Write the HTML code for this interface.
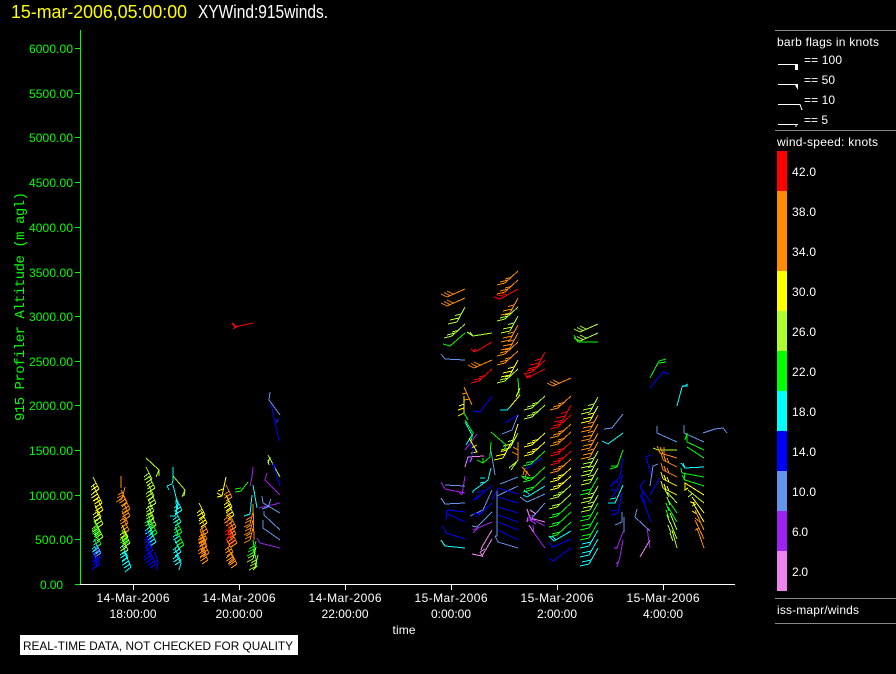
<!DOCTYPE html>
<html><head><meta charset="utf-8"><title>XYWind</title>
<style>
html,body{margin:0;padding:0;background:#000;width:896px;height:674px;overflow:hidden}
svg{display:block}
text{font-family:"Liberation Sans",sans-serif}
.l{fill:#fff;font-size:12px}
.gl{fill:#0f0;font-size:12px;text-anchor:end}
.x{fill:#fff;font-size:12px;text-anchor:middle}
.b{fill:none;shape-rendering:crispEdges;stroke-width:1}
.r{stroke:#f00}.o{stroke:#ff8c00}.y{stroke:#ff0}.v{stroke:#adff2f}.g{stroke:#0f0}.c{stroke:#0ff}.u{stroke:#00f}.w{stroke:#6495ed}.p{stroke:#a020f0}.k{stroke:#ee82ee}
</style></head><body>
<svg width="896" height="674" viewBox="0 0 896 674" xmlns="http://www.w3.org/2000/svg">
<defs>
<path id="f" d="M0 0L-8 15M-8 15l-9 2M-6 11l-9 2M-4 7l-6 1.500"/>
<path id="f2" d="M0 0L-9 16M-9 16l-9 2M-7 12l-9 2"/>
<path id="h" d="M0 0L-13 12M-13 12l-8 2M-10 9l-8 2M-7 6.500l-6 1.500"/>
<path id="h2" d="M0 0L-14 13M-14 13l-8 2M-11 10l-8 2"/>
<path id="h1" d="M0 0L-15 13M-15 13l-7 2"/>
<path id="e" d="M0 0L-18 8M-18 8l-6-3M-15 6.500l-6-3M-12 5l-6-3"/>
<path id="n" d="M0 0L6 12M6 12l-6 4M4.500 9l-6 4M3 6l-5 4"/>
<path id="m" d="M0 0L-3 12M-3 12l-6 3M-2 8l-6 3M-2 5l-5 3"/>
<path id="s" d="M0 0L-14-7M-14-7l-2-7M-11-5l-2-6M-8-4l-2-5"/>
</defs>
<rect width="896" height="674" fill="#000"/>

<text x="11" y="18" font-size="18" fill="#ff0" textLength="176" lengthAdjust="spacingAndGlyphs">15-mar-2006,05:00:00</text>
<text x="198" y="18" font-size="18" fill="#fff" textLength="130" lengthAdjust="spacingAndGlyphs">XYWind:915winds.</text>

<g shape-rendering="crispEdges" stroke="#0f0" fill="none">
<path d="M80.500 30V585M75 48.500h5M75 93.500h5M75 137.500h5M75 182.500h5M75 227.500h5M75 272.500h5M75 316.500h5M75 361.500h5M75 405.500h5M75 450.500h5M75 495.500h5M75 539.500h5M75 584.500h5"/>
</g>
<g class="gl">
<text x="73" y="53" textLength="44">6000.00</text>
<text x="73" y="98" textLength="44">5500.00</text>
<text x="73" y="142" textLength="44">5000.00</text>
<text x="73" y="187" textLength="44">4500.00</text>
<text x="73" y="232" textLength="44">4000.00</text>
<text x="73" y="277" textLength="44">3500.00</text>
<text x="73" y="321" textLength="44">3000.00</text>
<text x="73" y="366" textLength="44">2500.00</text>
<text x="73" y="410" textLength="44">2000.00</text>
<text x="73" y="455" textLength="44">1500.00</text>
<text x="73" y="500" textLength="44">1000.00</text>
<text x="73" y="544" textLength="38">500.00</text>
<text x="63" y="589" textLength="23">0.00</text>
</g>
<text transform="translate(24,421) rotate(-90)" font-size="14" fill="#0f0" style="font-family:'Liberation Mono',monospace" textLength="229">915 Profiler Altitude (m agl)</text>

<path shape-rendering="crispEdges" stroke="#fff" fill="none" d="M80 584.500H735M133.500 584V590M239.500 584V590M345.500 584V590M451.500 584V590M557.500 584V590M663.500 584V590"/>
<g class="x">
<text x="133" y="602" textLength="73">14-Mar-2006</text><text x="133" y="618" textLength="47">18:00:00</text>
<text x="239" y="602" textLength="73">14-Mar-2006</text><text x="239" y="618" textLength="47">20:00:00</text>
<text x="345" y="602" textLength="73">14-Mar-2006</text><text x="345" y="618" textLength="47">22:00:00</text>
<text x="451" y="602" textLength="73">15-Mar-2006</text><text x="451" y="618" textLength="40">0:00:00</text>
<text x="557" y="602" textLength="73">15-Mar-2006</text><text x="557" y="618" textLength="40">2:00:00</text>
<text x="663" y="602" textLength="73">15-Mar-2006</text><text x="663" y="618" textLength="40">4:00:00</text>
<text x="404" y="634" textLength="23">time</text>
</g>

<rect x="20" y="635" width="278" height="20" fill="#fff"/>
<text x="23" y="650" font-size="12" fill="#000" textLength="270" lengthAdjust="spacingAndGlyphs">REAL-TIME DATA, NOT CHECKED FOR QUALITY</text>

<path shape-rendering="crispEdges" stroke="#888" fill="none" d="M775 30.500H896M775 130.500H896M775 598.500H896M775 623.500H896"/>
<text class="l" x="777" y="46" textLength="102">barb flags in knots</text>
<g class="l">
<text x="804" y="64" textLength="38">== 100</text>
<text x="804" y="84" textLength="31">== 50</text>
<text x="804" y="104" textLength="31">== 10</text>
<text x="804" y="124" textLength="24">== 5</text>
</g>
<g shape-rendering="crispEdges" stroke="#fff" fill="none">
<path d="M778 64.500H798M778 84.500H798M778 104.500H800L802 110M778 124.500H798M796 124.500V127"/>
</g>
<rect x="795" y="64" width="3" height="6" fill="#fff"/>
<path d="M795 85H798V90Z" fill="#fff"/>
<text class="l" x="777" y="146" textLength="101">wind-speed: knots</text>
<g shape-rendering="crispEdges">
<rect x="777" y="151" width="10" height="40" fill="#f00"/>
<rect x="777" y="191" width="10" height="80" fill="#ff8c00"/>
<rect x="777" y="271" width="10" height="40" fill="#ff0"/>
<rect x="777" y="311" width="10" height="40" fill="#adff2f"/>
<rect x="777" y="351" width="10" height="40" fill="#0f0"/>
<rect x="777" y="391" width="10" height="40" fill="#0ff"/>
<rect x="777" y="431" width="10" height="40" fill="#00f"/>
<rect x="777" y="471" width="10" height="40" fill="#6495ed"/>
<rect x="777" y="511" width="10" height="40" fill="#a020f0"/>
<rect x="777" y="551" width="10" height="40" fill="#ee82ee"/>
</g>
<g class="l">
<text x="792" y="176" textLength="24">42.0</text>
<text x="792" y="216" textLength="24">38.0</text>
<text x="792" y="256" textLength="24">34.0</text>
<text x="792" y="296" textLength="24">30.0</text>
<text x="792" y="336" textLength="24">26.0</text>
<text x="792" y="376" textLength="24">22.0</text>
<text x="792" y="416" textLength="24">18.0</text>
<text x="792" y="456" textLength="24">14.0</text>
<text x="792" y="496" textLength="24">10.0</text>
<text x="792" y="536" textLength="16">6.0</text>
<text x="792" y="576" textLength="16">2.0</text>
<text x="777" y="614" textLength="82">iss-mapr/winds</text>
</g>

<g class="b">
<!-- isolated red at 2900 -->
<path class="r" d="M253 323L235 327L232 323M238 326L233 329M236 327l-3-4"/>

<!-- early columns -->
<use href="#n" class="y" x="93" y="477"/><use href="#n" class="y" x="93" y="485"/><use href="#n" class="y" x="96" y="491"/><use href="#n" class="y" x="97" y="498"/><use href="#n" class="y" x="95" y="505"/><use href="#n" class="v" x="97" y="512"/><use href="#n" class="v" x="94" y="519"/><use href="#n" class="v" x="97" y="525"/><use href="#n" class="g" x="94" y="521"/><use href="#n" class="g" x="95" y="532"/><use href="#n" class="c" x="94" y="539"/><use href="#n" class="u" x="95" y="545"/><use href="#n" class="w" x="95" y="541"/><use href="#n" class="u" x="94" y="552"/>
<path class="u" d="M92 570L97 565L94 556"/>

<path class="o" d="M121 476V488"/>
<use href="#m" class="o" x="125" y="487"/><use href="#n" class="o" x="121" y="490"/><use href="#n" class="o" x="124" y="497"/><use href="#n" class="o" x="124" y="504"/><use href="#n" class="o" x="122" y="511"/><use href="#n" class="o" x="123" y="518"/><use href="#n" class="y" x="122" y="525"/><use href="#n" class="v" x="124" y="531"/><use href="#n" class="g" x="122" y="530"/><use href="#n" class="v" x="122" y="538"/><use href="#n" class="c" x="122" y="545"/><use href="#n" class="c" x="124" y="552"/>
<path class="c" d="M125 572L131 567L125 553"/>

<path class="v" d="M146 458L159 470L156 477M159 470L159 476"/>
<use href="#n" class="v" x="146" y="467"/><use href="#n" class="v" x="149" y="476"/><use href="#n" class="v" x="148" y="484"/><use href="#n" class="v" x="150" y="491"/><use href="#n" class="v" x="148" y="499"/><use href="#n" class="v" x="148" y="506"/><use href="#n" class="g" x="147" y="513"/><use href="#n" class="v" x="150" y="513"/><use href="#n" class="c" x="147" y="521"/><use href="#n" class="g" x="151" y="521"/><use href="#n" class="u" x="146" y="530"/><use href="#n" class="c" x="150" y="530"/><use href="#n" class="u" x="147" y="538"/><use href="#n" class="u" x="146" y="547"/><use href="#n" class="u" x="150" y="552"/>
<path class="u" d="M156 570L158 563L155 552"/>

<path class="c" d="M173 467V480L172 484L167 486L169 490"/>
<path class="v" d="M173 476L185 490L182 497M185 490L184 496"/>
<path class="c" d="M173 485L178 505L175 516L170 516M176 500L177 515"/>
<use href="#n" class="c" x="176" y="498"/><use href="#n" class="c" x="175" y="510"/><use href="#n" class="g" x="176" y="520"/><use href="#n" class="c" x="175" y="527"/><use href="#n" class="g" x="178" y="533"/><use href="#n" class="c" x="175" y="540"/><use href="#n" class="c" x="175" y="549"/>
<path class="c" d="M179 570L181 563L176 555"/>

<use href="#n" class="y" x="199" y="503"/><use href="#n" class="y" x="201" y="511"/><use href="#n" class="o" x="202" y="520"/><use href="#n" class="o" x="201" y="527"/><use href="#n" class="o" x="201" y="534"/><use href="#n" class="o" x="203" y="541"/><use href="#n" class="o" x="202" y="548"/><use href="#n" class="o" x="200" y="541"/><use href="#n" class="o" x="200" y="530"/>

<path class="y" d="M226 477L222 496L217 497M222 496l-5-3M223 489l-5 2"/>
<use href="#n" class="o" x="226" y="485"/><use href="#n" class="y" x="226" y="495"/><use href="#n" class="y" x="228" y="503"/><use href="#n" class="o" x="226" y="510"/><use href="#n" class="o" x="230" y="515"/><use href="#n" class="r" x="227" y="522"/><use href="#n" class="o" x="230" y="522"/><use href="#n" class="r" x="228" y="530"/><use href="#n" class="o" x="231" y="531"/><use href="#n" class="o" x="227" y="540"/><use href="#n" class="o" x="228" y="548"/><use href="#n" class="o" x="231" y="552"/>

<path class="p" d="M253 467L252 477L250 486"/>
<path class="g" d="M235 492L241 491L248 482M235 489L241 488"/>
<path class="c" d="M253 485L257 508M252 495L250 514L244 516"/>
<path class="o" d="M253 504L254 540"/>
<use href="#m" class="o" x="253" y="512"/><use href="#m" class="o" x="253" y="520"/><use href="#m" class="o" x="253" y="528"/>
<path class="g" d="M253 540L257 567"/>
<use href="#m" class="v" x="256" y="547"/><use href="#m" class="g" x="256" y="541"/><use href="#m" class="v" x="258" y="555"/>
<path class="v" d="M253 570L257 566"/>

<path class="w" d="M270 392L269 400L280 415M278 420L275 423"/>
<path class="u" d="M271 404L275 422L279 441M279 418L275 423"/>
<path class="v" d="M268 455L280 477M268 460L269 465M270 457L268 463"/>
<path class="u" d="M273 463L280 486M276 464L273 468"/>
<path class="p" d="M267 473L265 480L280 495"/>
<path class="p" d="M259 508L280 503"/>
<path class="w" d="M262 496L263 503L280 513M271 499L268 507L262 509M264 511V515L280 530M263 520V528L280 540"/>
<path class="p" d="M257 538L260 543L280 548"/>

<!-- 15-Mar upper -->
<use href="#e" class="o" x="465" y="289"/><use href="#e" class="o" x="465" y="298"/>
<use href="#f" class="v" x="465" y="307"/><use href="#h" class="v" x="465" y="324"/>
<path class="g" d="M465 333L450 346L443 344"/>
<path class="v" d="M492 333L473 336L467 332M473 336L470 332"/>
<path class="r" d="M492 342L475 352L471 349M476 349L473 352"/>
<path class="w" d="M465 360L445 359L441 354"/>
<use href="#e" class="o" x="492" y="360"/>
<use href="#h" class="r" x="492" y="369"/>
<path class="o" d="M464 387L472 405M467 393l-5 1M470 399l-6 1"/>
<path class="y" d="M464 396V413M464 413l-6 3M464 408l-6 2M464 404l-5 2"/>
<path class="g" d="M464 413L468 420"/>
<path class="u" d="M492 396L480 412L473 411"/>

<use href="#h" class="o" x="518" y="271"/><use href="#h" class="o" x="518" y="280"/>
<path class="r" d="M518 289L500 299L494 297M503 296l-6-1M506 295l-5-2"/>
<use href="#f" class="o" x="518" y="298"/><use href="#h" class="v" x="518" y="307"/><use href="#f" class="v" x="518" y="316"/><use href="#f" class="o" x="518" y="325"/><use href="#f" class="o" x="518" y="333"/><use href="#h" class="o" x="518" y="342"/><use href="#h" class="o" x="518" y="351"/><use href="#f" class="y" x="518" y="360"/><use href="#h" class="v" x="518" y="369"/>
<path class="g" d="M518 378L519 395"/>
<path class="y" d="M520 388L516 397M520 395L510 407"/>
<path class="c" d="M510 407L507 410H500"/>

<use href="#f" class="r" x="545" y="352"/><use href="#h" class="r" x="545" y="360"/>
<path class="r" d="M545 369L527 378L525 373M527 378l3-3M526 376l5 1"/>
<use href="#e" class="o" x="571" y="378"/>
<use href="#h" class="v" x="545" y="396"/><use href="#h" class="v" x="545" y="405"/>
<use href="#h" class="o" x="571" y="396"/>
<use href="#f" class="r" x="571" y="405"/>
<use href="#e" class="v" x="598" y="324"/><use href="#e" class="v" x="598" y="333"/>
<path class="g" d="M598 342H578L574 335M578 342L575 338"/>

<!-- column A x 445-465 -->
<path class="g" d="M465 420L473 433L471 441"/>
<path class="c" d="M465 422L472 435L466 445"/>
<path class="p" d="M477 434L465 450"/>
<path class="y" d="M469 438L477 452L471 453M477 445L471 448"/>
<path class="u" d="M470 443L473 453L468 463"/>
<path class="k" d="M484 456L468 457L465 467M472 458L470 462"/>
<path class="p" d="M465 476L462 495M465 493L445 489L441 482M462 495L458 491"/>
<path class="w" d="M465 486L445 485"/>
<path class="w" d="M465 503L445 504L441 498"/>
<path class="u" d="M465 512L447 510L446 520M465 522L446 513"/>
<path class="u" d="M465 539L446 533L443 526"/>
<path class="c" d="M465 548L445 546L441 540"/>

<!-- column B -->
<path class="g" d="M491 442L490 457L483 463L477 460M483 463L483 458"/>
<path class="w" d="M491 451L495 475"/>
<path class="c" d="M491 468L488 480L473 491L473 493M480 478L485 478M480 483L484 482"/>
<path class="u" d="M492 485L475 500M480 495L473 500M484 490L477 493"/>
<path class="w" d="M492 490L483 510L470 516"/>
<path class="u" d="M492 503L477 517M482 513L473 514"/>
<path class="w" d="M492 512L477 527L472 526"/>
<path class="p" d="M492 522L473 530M478 528L473 533"/>
<path class="k" d="M492 530L482 547L481 550"/>
<path class="k" d="M492 539L482 556L472 554M485 549L480 552M480 552L483 557"/>

<!-- column C -->
<path class="u" d="M518 415L505 423"/>
<path class="w" d="M518 415L512 430L502 434"/>
<path class="y" d="M518 424L512 443"/>
<use href="#f" class="v" x="518" y="433"/>
<path class="g" d="M491 432L506 445L504 450"/>
<use href="#f" class="y" x="511" y="443"/>
<path class="o" d="M518 442V460M518 455l-6-3M518 460l-4 5M518 450l-5-3"/>
<path class="v" d="M518 460L511 470M516 462L509 468"/>
<path class="o" d="M522 467L530 476M525 468L523 475M527 471L525 478"/>
<path class="u" d="M542 458L526 469"/>
<path class="g" d="M530 478L521 476M527 480l-5-3"/>
<path class="w" d="M518 477L500 484M518 486L497 496M497 490V536L495 536"/>
<path class="u" d="M518 494L498 488M518 503L498 497M518 513L498 507M518 522L498 515M518 530L498 522M518 540L498 530"/>
<path class="w" d="M518 548L498 542L495 536"/>
<path class="u" d="M498 488L492 500"/>

<!-- column D -->
<use href="#h" class="y" x="545" y="433"/><use href="#h" class="y" x="545" y="442"/><use href="#h2" class="g" x="545" y="451"/><use href="#h2" class="g" x="545" y="467"/><use href="#h2" class="g" x="545" y="477"/>
<path class="c" d="M545 486L527 497L523 495M529 494L524 490"/>
<path class="w" d="M545 494L527 502L520 497"/>
<path class="w" d="M545 503L530 520"/>
<path class="k" d="M545 522L530 518L527 509M530 510L536 514M528 517L527 522"/>
<path class="p" d="M533 515L527 518M533 520L527 520M530 520L536 524"/>
<path class="k" d="M529 525L534 533"/>
<path class="p" d="M545 548L534 533L533 525M545 526L530 518"/>

<!-- column E -->
<use href="#h" class="r" x="571" y="415"/><use href="#h" class="o" x="571" y="424"/><use href="#h" class="o" x="571" y="432"/><use href="#h" class="r" x="571" y="442"/><use href="#h" class="r" x="571" y="451"/><use href="#h" class="o" x="571" y="459"/><use href="#h" class="y" x="571" y="468"/><use href="#h" class="y" x="571" y="476"/><use href="#h" class="v" x="571" y="485"/><use href="#h2" class="v" x="571" y="494"/><use href="#h2" class="g" x="571" y="503"/><use href="#h2" class="g" x="571" y="512"/><use href="#h2" class="g" x="571" y="522"/>
<path class="c" d="M571 531L554 541L549 536M552 536L556 540"/>
<path class="u" d="M571 539L553 547L549 543"/>
<path class="u" d="M571 548L553 561L549 558"/>

<!-- column F -->
<use href="#f" class="v" x="598" y="397"/><use href="#f" class="y" x="598" y="406"/><use href="#f" class="o" x="598" y="415"/><use href="#f" class="o" x="598" y="424"/><use href="#f" class="o" x="598" y="433"/><use href="#f" class="o" x="598" y="442"/><use href="#f" class="v" x="598" y="451"/><use href="#f" class="v" x="598" y="459"/><use href="#f" class="v" x="598" y="468"/><use href="#f2" class="g" x="598" y="477"/><use href="#f" class="v" x="598" y="486"/><use href="#f" class="v" x="598" y="495"/><use href="#f2" class="g" x="598" y="503"/><use href="#f2" class="g" x="598" y="512"/><use href="#f2" class="g" x="598" y="522"/><use href="#f2" class="c" x="598" y="530"/><use href="#f2" class="c" x="598" y="539"/><use href="#f2" class="c" x="598" y="548"/>

<!-- column G -->
<path class="w" d="M623 414L612 428L604 429"/>
<path class="c" d="M623 433L608 444L602 441"/>
<path class="g" d="M623 450L617 467L610 469M617 466L611 466"/>
<path class="u" d="M623 458L620 477L610 487M618 482L613 482"/>
<path class="u" d="M623 475L617 490L612 497M617 490L611 490"/>
<path class="c" d="M623 485L615 503L608 503M616 498L610 499"/>
<path class="u" d="M622 493L618 513L612 515M617 510L611 511"/>
<path class="w" d="M622 512L622 522L615 525"/>
<path class="w" d="M624 517V532H623"/>
<path class="p" d="M623 532L617 548L614 548M618 545L616 549"/>
<path class="p" d="M623 540L620 557L617 567M618 562L616 564"/>

<!-- sparse upper right -->
<path class="g" d="M666 359L659 361L650 378M666 362L659 363"/>
<path class="u" d="M669 374L663 372L650 388"/>
<path class="c" d="M688 384L682 387L677 406M688 386L682 386"/>
<path class="w" d="M703 433L715 429L723 428L727 433"/>

<!-- column K -->
<path class="u" d="M651 455L646 457L652 477"/>
<path class="w" d="M658 464L653 466L650 486"/>
<path class="u" d="M660 478L650 495"/>
<path class="u" d="M645 480L640 487L651 503"/>
<path class="u" d="M643 490L642 497L651 522M640 495L646 503M643 501L641 496"/>
<path class="w" d="M637 509L635 517L650 531"/>
<path class="p" d="M647 528L650 548"/>
<path class="k" d="M650 540L640 557"/>

<!-- column I -->
<path class="w" d="M657 426V433L677 442"/>
<path class="v" d="M653 448L658 450L677 450"/>
<path class="o" d="M677 458L660 453L657 446M660 447L663 454M664 447L664 456"/>
<use href="#s" class="o" x="677" y="467"/><use href="#s" class="o" x="677" y="477"/><use href="#s" class="y" x="677" y="486"/><use href="#s" class="y" x="677" y="495"/>
<path class="v" d="M677 503L667 492M664 488l5 9M667 497l3 8"/>
<path class="g" d="M677 513L668 500M666 503l3 8"/>
<path class="g" d="M677 522L668 507M666 510l3 8"/>
<path class="v" d="M677 530L670 513M667 515l3 8"/>
<path class="v" d="M677 539L670 522M668 525l3 8"/>
<path class="v" d="M677 548L672 530M670 533l3 8"/>

<!-- column J -->
<path class="w" d="M704 442L684 433V425"/>
<path class="g" d="M704 450L687 442V433L685 440"/>
<path class="g" d="M704 458L687 447"/>
<path class="c" d="M704 467L685 468L681 463M685 468L683 463"/>
<path class="g" d="M704 477L682 473L681 468M685 473L684 480"/>
<path class="g" d="M704 486L685 480L682 475"/>
<path class="y" d="M704 495L685 483V490L688 488"/>
<path class="v" d="M704 503L688 490M688 497l4-3"/>
<path class="y" d="M704 513L692 497M690 502l5 1M692 506l4-2"/>
<path class="y" d="M704 522L693 503M692 511l5 3"/>
<path class="o" d="M704 530L695 510M695 518l5 4"/>
<path class="o" d="M704 539L695 520M695 530l5-2"/>
<path class="o" d="M704 548L697 528"/>
</g>
</svg>
</body></html>
